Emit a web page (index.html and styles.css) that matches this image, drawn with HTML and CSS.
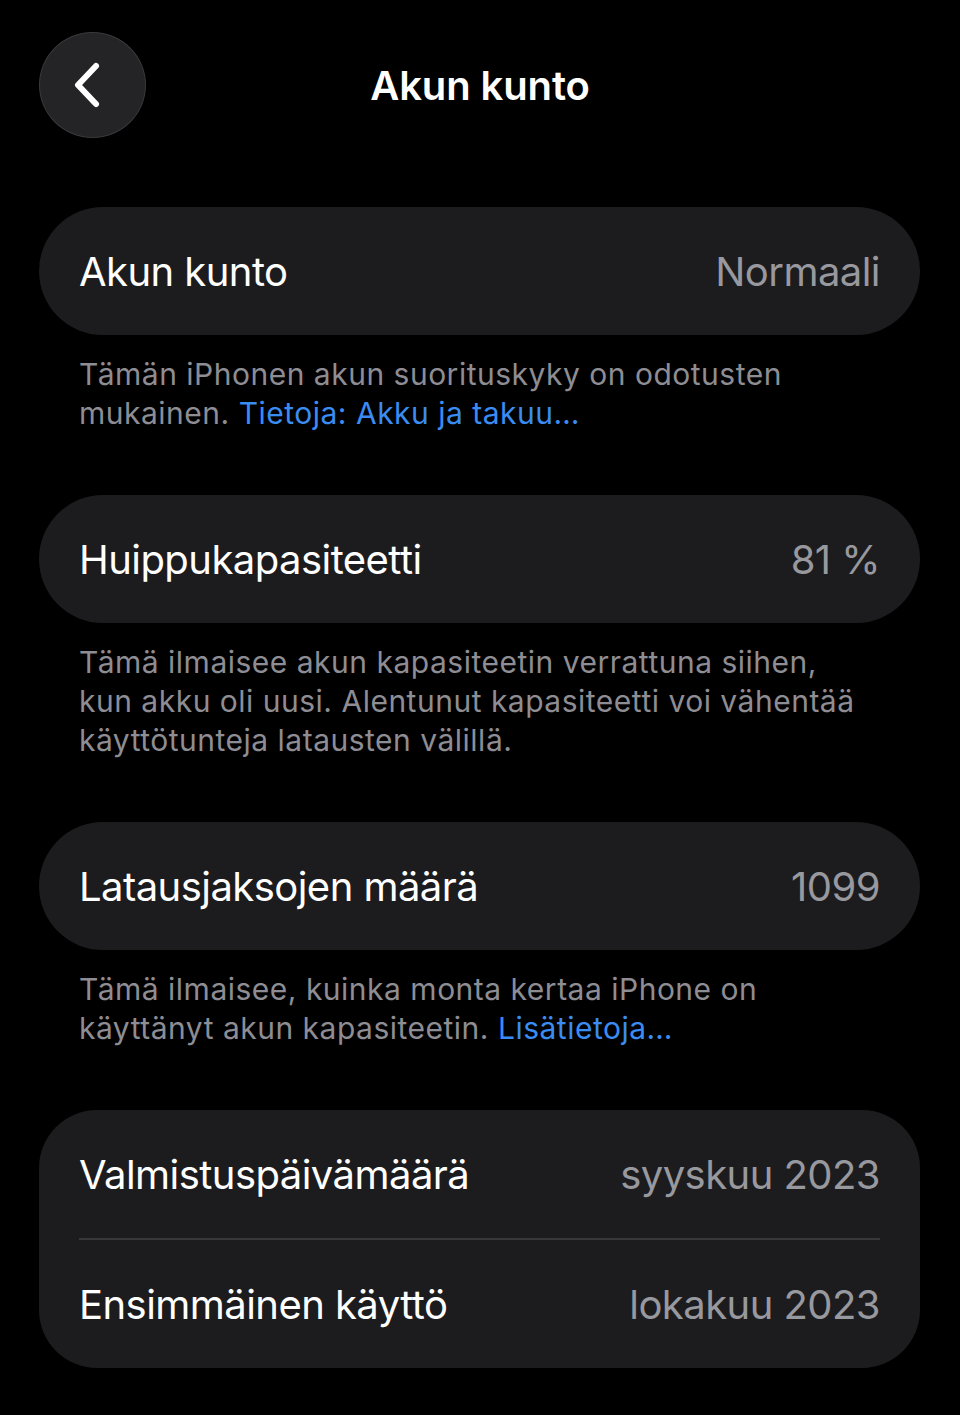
FILE: index.html
```html
<!DOCTYPE html>
<html lang="fi">
<head>
    <meta charset="UTF-8">
    <meta name="viewport" content="width=960, initial-scale=1.0">
    <title>Akun kunto</title>
    <link rel="stylesheet" href="styles.css">
</head>
<body>
    <header class="nav">
        <div class="nav-left">
            <button class="back-button" aria-label="Takaisin">
                <svg width="40" height="56" viewBox="0 0 40 56">
                    <path d="M26 9 L8 28 L26 47" fill="none" stroke="#fff" stroke-width="6" stroke-linecap="round" stroke-linejoin="round"/>
                </svg>
            </button>
        </div>
        <h1 class="nav-title">Akun kunto</h1>
        <div></div>
    </header>

    <main class="content">
        <section class="group">
            <div class="card">
                <div class="row">
                    <span class="label">Akun kunto</span>
                    <span class="value">Normaali</span>
                </div>
            </div>
            <p class="footer">Tämän iPhonen akun suorituskyky on odotusten mukainen. <a href="#">Tietoja: Akku ja takuu…</a></p>
        </section>

        <section class="group">
            <div class="card">
                <div class="row">
                    <span class="label">Huippukapasiteetti</span>
                    <span class="value">81 %</span>
                </div>
            </div>
            <p class="footer">Tämä ilmaisee akun kapasiteetin verrattuna siihen, kun akku oli uusi. Alentunut kapasiteetti voi vähentää käyttötunteja latausten välillä.</p>
        </section>

        <section class="group">
            <div class="card">
                <div class="row">
                    <span class="label">Latausjaksojen määrä</span>
                    <span class="value">1099</span>
                </div>
            </div>
            <p class="footer">Tämä ilmaisee, kuinka monta kertaa iPhone on käyttänyt akun kapasiteetin. <a href="#">Lisätietoja…</a></p>
        </section>

        <section class="group">
            <div class="card card-list">
                <div class="row">
                    <span class="label">Valmistuspäivämäärä</span>
                    <span class="value">syyskuu 2023</span>
                </div>
                <div class="divider"></div>
                <div class="row">
                    <span class="label">Ensimmäinen käyttö</span>
                    <span class="value">lokakuu 2023</span>
                </div>
            </div>
        </section>
    </main>
</body>
</html>
```

FILE: styles.css
```css
body {
    margin: 0;
    padding: 0;
    background-color: #000;
    color: #fff;
    font-family: 'Inter', 'Noto Sans', sans-serif;
}
.nav {
    display: grid;
    grid-template-columns: 1fr auto 1fr;
    align-items: center;
    padding-top: 32px;
    height: 106px;
}
.nav-left {
    padding-left: 39px;
}
.back-button {
    width: 107px;
    height: 106px;
    border-radius: 50%;
    background-color: #242426;
    border: 1px solid #3a3a3c;
    display: flex;
    align-items: center;
    justify-content: center;
    padding: 0 6px 0 0;
    cursor: pointer;
}
.nav-title {
    margin: 0;
    font-size: 40px;
    font-weight: 600;
    letter-spacing: -0.1px;
}
.content {
    padding: 69px 40px 0 39px;
}
.group {
    margin-bottom: 62px;
}
.card {
    background-color: #1c1c1e;
    border-radius: 64px;
    padding: 0 40px 0 40px;
}
.card-list {
    border-radius: 58px;
}
.row {
    height: 128px;
    display: flex;
    align-items: center;
    justify-content: space-between;
    font-size: 40px;
    letter-spacing: -0.55px;
}
.value {
    color: #98989f;
}
.divider {
    height: 2px;
    background-color: #38383a;
}
.footer {
    margin: 20px 0 0;
    padding: 0 56px 0 40px;
    font-size: 30px;
    line-height: 39px;
    color: #8d8d93;
    letter-spacing: 0.5px;
}
.footer a {
    color: #3b8cf2;
    text-decoration: none;
}
```
